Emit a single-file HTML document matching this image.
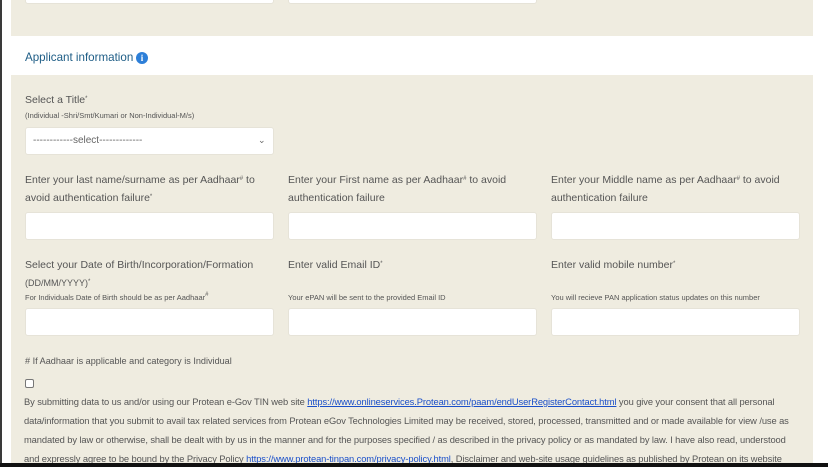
<!DOCTYPE html>
<html><head><meta charset="utf-8"><style>
*{margin:0;padding:0;box-sizing:border-box}
html,body{width:828px;height:467px;overflow:hidden}
body{background:#fff;font-family:"Liberation Sans",Arial,sans-serif;color:#555;position:relative}
.lb{position:absolute;left:0;top:0;width:2px;height:467px;background:#3a3a3a}
.bb{position:absolute;left:0;top:463px;width:828px;height:4px;background:#111}
.p{position:absolute;left:11px;width:802px;background:#efece0}
.in{position:absolute;height:28px;background:#fff;border:1px solid #e6e3d8;border-radius:3px}
.t{position:absolute;font-size:10.5px;line-height:18px;color:#555;white-space:nowrap}
.s{position:absolute;font-size:7.5px;color:#555;white-space:nowrap}
sup{font-size:6px;vertical-align:top;position:relative;top:-1px}
.para{position:absolute;left:24px;top:393px;font-size:9.35px;letter-spacing:-0.1px;line-height:19px;color:#555;white-space:nowrap;overflow:hidden;width:800px;height:70px}
.para a{color:#1a4fc9;text-decoration:underline}
</style></head><body>
<div class="lb"></div>
<div class="p" style="top:0;height:36px"></div>
<div class="in" style="left:25px;top:-24px;width:249px"></div>
<div class="in" style="left:288px;top:-24px;width:249px"></div>
<div style="position:absolute;left:25px;top:51px;font-size:11.6px;color:#1e5d86;white-space:nowrap">Applicant information</div>
<div style="position:absolute;left:136px;top:52px;width:12px;height:12px;border-radius:50%;background:#2d7fd8;color:#fff;font-size:9px;font-weight:bold;text-align:center;line-height:12px;font-family:'Liberation Serif',serif">i</div>
<div class="p" style="top:75px;height:388px"></div>
<div class="t" style="left:25px;top:91px">Select a Title<sup>*</sup></div>
<div class="s" style="left:25px;top:111px">(Individual -Shri/Smt/Kumari or Non-Individual-M/s)</div>
<div class="in" style="left:25px;top:127px;width:249px;height:28px"></div>
<div class="t" style="left:33px;top:132px;font-size:10px;line-height:18px;color:#666">------------select-------------</div>
<div class="t" style="left:258px;top:131px;font-size:9px;color:#666">&#8964;</div>
<div class="t" style="left:25px;top:171px">Enter your last name/surname as per Aadhaar<sup>#</sup> to<br>avoid authentication failure<sup>*</sup></div>
<div class="t" style="left:288px;top:171px">Enter your First name as per Aadhaar<sup>#</sup> to avoid<br>authentication failure</div>
<div class="t" style="left:551px;top:171px">Enter your Middle name as per Aadhaar<sup>#</sup> to avoid<br>authentication failure</div>
<div class="in" style="left:25px;top:212px;width:249px"></div>
<div class="in" style="left:288px;top:212px;width:249px"></div>
<div class="in" style="left:551px;top:212px;width:249px"></div>
<div class="t" style="left:25px;top:256px">Select your Date of Birth/Incorporation/Formation</div>
<div class="t" style="left:25px;top:274px;font-size:9px">(DD/MM/YYYY)<sup>*</sup></div>
<div class="s" style="left:25px;top:293px">For Individuals Date of Birth should be as per Aadhaar<sup>#</sup></div>
<div class="t" style="left:288px;top:256px">Enter valid Email ID<sup>*</sup></div>
<div class="s" style="left:288px;top:293px">Your ePAN will be sent to the provided Email ID</div>
<div class="t" style="left:551px;top:256px">Enter valid mobile number<sup>*</sup></div>
<div class="s" style="left:551px;top:293px">You will recieve PAN application status updates on this number</div>
<div class="in" style="left:25px;top:308px;width:249px"></div>
<div class="in" style="left:288px;top:308px;width:249px"></div>
<div class="in" style="left:551px;top:308px;width:249px"></div>
<div class="t" style="left:25px;top:352px;font-size:9.1px"># If Aadhaar is applicable and category is Individual</div>
<div style="position:absolute;left:25px;top:379px;width:9px;height:9px;border:1px solid #777;border-radius:2px;background:#fff"></div>
<div class="para">By submitting data to us and/or using our Protean e-Gov TIN web site <a>https://www.onlineservices.Protean.com/paam/endUserRegisterContact.html</a> you give your consent that all personal<br>data/information that you submit to avail tax related services from Protean eGov Technologies Limited may be received, stored, processed, transmitted and or made available for view /use as<br>mandated by law or otherwise, shall be dealt with by us in the manner and for the purposes specified / as described in the privacy policy or as mandated by law. I have also read, understood<br>and expressly agree to be bound by the Privacy Policy <a>https://www.protean-tinpan.com/privacy-policy.html</a>, Disclaimer and web-site usage guidelines as published by Protean on its website<br>from time to time.</div>
<div class="bb"></div>
</body></html>
